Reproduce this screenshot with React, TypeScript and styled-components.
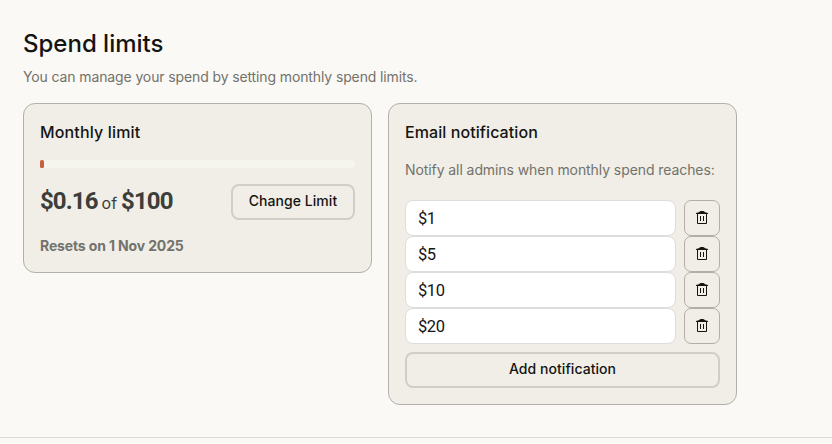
import React from "react";
import styled, { createGlobalStyle } from "styled-components";

const GlobalStyle = createGlobalStyle`
  *, *::before, *::after { box-sizing: border-box; }
  body { margin: 0; background: #faf9f5; }
  h1, h2, p { margin: 0; font-weight: 400; }
  button, input { font: inherit; margin: 0; }
`;

const Page = styled.main`
  height: 438px;
  padding: 28px 0 0 23px;
  background: #faf9f5;
  border-bottom: 1px solid #dad9d4;
  color: #141413;
  font-family: Inter, "Liberation Sans", sans-serif;
  white-space: nowrap;
`;

const Title = styled.h1`
  font-size: 24px;
  font-weight: 450;
  line-height: 32px;
  letter-spacing: 0;
`;

const Muted = styled.p<{ $spacing: string }>`
  font-size: 14px;
  line-height: 20px;
  letter-spacing: ${(p) => p.$spacing};
  color: #73726c;
`;

const Subtitle = styled(Muted)`
  margin-top: 7px;
`;

const Cards = styled.div`
  display: flex;
  align-items: flex-start;
  gap: 16px;
  margin-top: 16px;
`;

const Card = styled.section`
  width: 349px;
  padding: 16px;
  border: 1px solid #b1afa8;
  border-radius: 12px;
  background: #f0eee6;
`;

const LimitCard = styled(Card)`
  height: 170px;
`;

const NotificationCard = styled(Card)`
  height: 302px;
`;

const CardTitle = styled.h2<{ $spacing: string }>`
  font-size: 16px;
  font-weight: 500;
  line-height: 24px;
  letter-spacing: ${(p) => p.$spacing};
`;

const Track = styled.div`
  height: 8px;
  margin-top: 16px;
  border-radius: 4px;
  background: #f5f4ed;
`;

const Fill = styled.div`
  width: 4px;
  height: 8px;
  border-radius: 1.5px;
  background: #c6613f;
`;

const UsageRow = styled.div`
  display: flex;
  align-items: center;
  justify-content: space-between;
  height: 36px;
  margin-top: 16px;
`;

const Usage = styled.div`
  display: flex;
  align-items: baseline;
  gap: 4px;
  color: #3d3d3a;
  font-size: 16px;
  line-height: 32px;
`;

const Amount = styled.strong<{ $spacing: string }>`
  font-family: Roboto, Inter, sans-serif;
  font-size: 24px;
  font-weight: 700;
  letter-spacing: ${(p) => p.$spacing};
`;

const Resets = styled(Muted)`
  margin-top: 16px;
  font-weight: 700;
`;

const OutlineButton = styled.button<{ $width: string }>`
  width: ${(p) => p.$width};
  height: 36px;
  padding: 0 0 2px;
  border: 2px solid #d1cfc5;
  border-radius: 8px;
  background: transparent;
  color: #141413;
  font-size: 14px;
  font-weight: 500;
  line-height: 20px;
  letter-spacing: 0.05px;
`;

const Notice = styled(Muted)`
  margin-top: 16px;
`;

const List = styled.div`
  display: flex;
  flex-direction: column;
  margin: 20px 0 8px;
`;

const Row = styled.div`
  display: flex;
  gap: 8px;
`;

const AmountInput = styled.input`
  flex: 1;
  min-width: 0;
  height: 36px;
  padding: 0 12px;
  border: 1px solid #dedddb;
  border-radius: 8px;
  background: #fff;
  color: #141413;
  font-family: Roboto, Inter, sans-serif;
  font-size: 16.5px;
  letter-spacing: -0.4px;
`;

const IconButton = styled.button`
  display: grid;
  place-items: center;
  width: 36px;
  height: 36px;
  padding: 0;
  border: 1px solid #b1afa8;
  border-radius: 7px;
  background: transparent;
  color: #141413;
`;

const TrashIcon = () => (
  <svg width="16" height="16" viewBox="0 0 16 16" fill="none" aria-hidden="true">
    <path d="M5 2.2C5.5 1.3 6.4 1 8 1s2.5.3 3 1.2c1.6.1 3.2.7 3.2 1.8H1.8c0-1.1 1.6-1.7 3.2-1.8Z" fill="currentColor" />
    <path d="M3.5 3.5v10h9v-10M6.5 6v5M9.5 6v5" stroke="currentColor" />
  </svg>
);

const amounts = ["$1", "$5", "$10", "$20"];

export default function App() {
  return (
    <>
      <GlobalStyle />
      <Page>
        <Title>Spend limits</Title>
        <Subtitle $spacing="-0.12px">You can manage your spend by setting monthly spend limits.</Subtitle>
        <Cards>
          <LimitCard>
            <CardTitle $spacing="0.16px">Monthly limit</CardTitle>
            <Track>
              <Fill />
            </Track>
            <UsageRow>
              <Usage>
                <Amount $spacing="-0.9px">$0.16</Amount>
                <span>of</span>
                <Amount $spacing="-0.9px">$100</Amount>
              </Usage>
              <OutlineButton $width="124px">Change Limit</OutlineButton>
            </UsageRow>
            <Resets $spacing="-0.14px">Resets on 1 Nov 2025</Resets>
          </LimitCard>
          <NotificationCard>
            <CardTitle $spacing="0.08px">Email notification</CardTitle>
            <Notice $spacing="-0.08px">Notify all admins when monthly spend reaches:</Notice>
            <List>
              {amounts.map((amount) => (
                <Row key={amount}>
                  <AmountInput defaultValue={amount} aria-label="Amount" />
                  <IconButton aria-label="Delete">
                    <TrashIcon />
                  </IconButton>
                </Row>
              ))}
            </List>
            <OutlineButton $width="100%">Add notification</OutlineButton>
          </NotificationCard>
        </Cards>
      </Page>
    </>
  );
}
